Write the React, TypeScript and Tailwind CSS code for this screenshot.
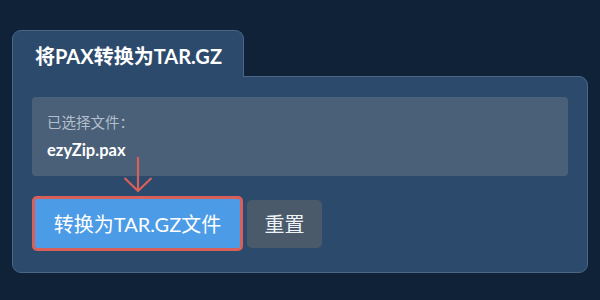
import React from 'react'

const font = { fontFamily: 'Lato, "Noto Sans CJK SC", sans-serif' }

function DownArrow() {
    return (
        <svg className="absolute left-[91px] top-[-39px]" width="32" height="38" viewBox="0 0 32 38" fill="none">
            <path d="M15 0 V34" stroke="#d9605a" strokeWidth="2.2" />
            <path d="M1.5 21 L15 34 L28.5 21" stroke="#d9605a" strokeWidth="2.2" />
        </svg>
    )
}

export default function App() {
    return (
        <div className="w-[600px] h-[300px] bg-[#102238] pt-[30px] pl-[12px]" style={font}>
            {/* Tab */}
            <div className="relative z-10 w-[232px] h-[47px] mb-[-1px] bg-[#2c4a6b] border border-b-0 border-[#4a6788] rounded-t-[9px] pl-[22px] pt-[12px]">
                <h1 className="text-[20px] font-bold text-white leading-[26px]">将PAX转换为TAR.GZ</h1>
            </div>
            {/* Panel */}
            <div className="w-[576px] h-[197px] bg-[#2c4a6b] border border-[#4a6788] rounded-b-[9px] rounded-tr-[9px] pt-[20px] px-[19px]">
                <div className="h-[79px] bg-[#4a6078] rounded-[4px] pl-[15px] pt-[16px]">
                    <p className="text-[14.5px] text-[#b4bfcc] leading-[20px]">已选择文件：</p>
                    <p className="text-[16.5px] font-bold text-white leading-[20px] mt-[7px]">ezyZip.pax</p>
                </div>
                <div className="relative flex items-center gap-[4px] mt-[20px]">
                    <DownArrow />
                    <button className="w-[211px] h-[55px] bg-[#4b9be6] border-[3px] border-[#d9605a] rounded-[5px] text-white text-[20px]">
                        转换为TAR.GZ文件
                    </button>
                    <button className="w-[75px] h-[48px] bg-[#4a5a6b] rounded-[5px] text-[#eef2f6] text-[20px]">
                        重置
                    </button>
                </div>
            </div>
        </div>
    )
}
